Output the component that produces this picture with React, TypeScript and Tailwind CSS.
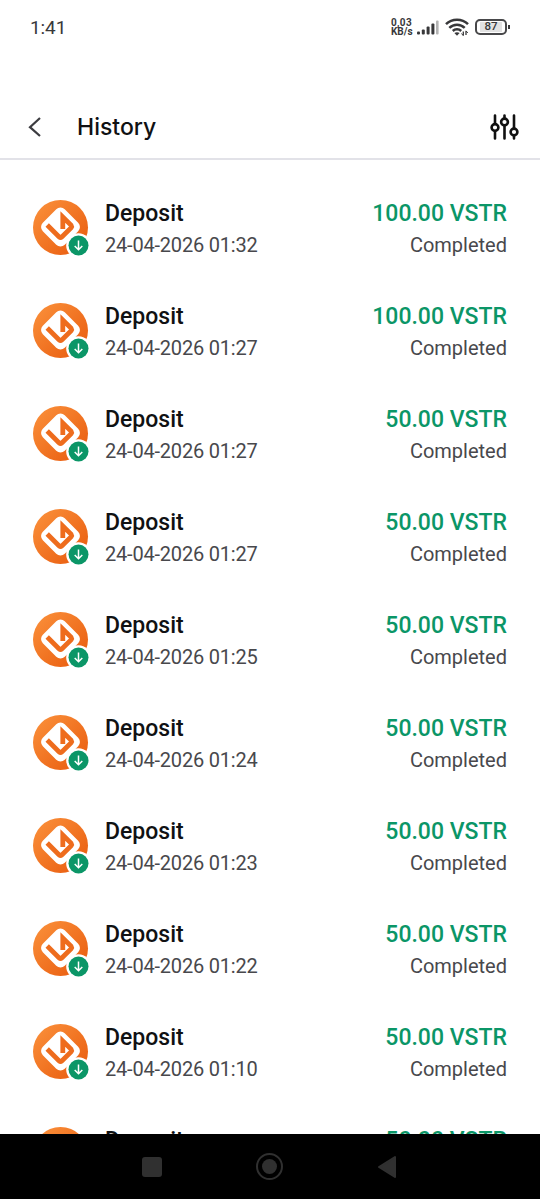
import React from "react";

type Item = { date: string; amount: string };

const items: Item[] = [
  { date: "24-04-2026 01:32", amount: "100.00" },
  { date: "24-04-2026 01:27", amount: "100.00" },
  { date: "24-04-2026 01:27", amount: "50.00" },
  { date: "24-04-2026 01:27", amount: "50.00" },
  { date: "24-04-2026 01:25", amount: "50.00" },
  { date: "24-04-2026 01:24", amount: "50.00" },
  { date: "24-04-2026 01:23", amount: "50.00" },
  { date: "24-04-2026 01:22", amount: "50.00" },
  { date: "24-04-2026 01:10", amount: "50.00" },
  { date: "24-04-2026 01:09", amount: "50.00" },
];

function StatusBar() {
  return (
    <div className="flex h-[54px] shrink-0 items-center justify-between pl-[30px] pr-[30px] text-[#38383a]">
      <span className="text-[19px] leading-none tracking-[-0.1px]">1:41</span>
      <div className="flex items-center">
        <div className="w-[21px] text-center text-[10px] font-bold leading-[9px]">
          <div className="tracking-[0.3px]">0,03</div>
          <div>KB/s</div>
        </div>
        {/* señal */}
        <svg width="22" height="15" viewBox="0 0 22 15" className="ml-[5px]">
          <g fill="#38383a">
            <rect x="0" y="11.5" width="3" height="3" rx="1" />
            <rect x="4.8" y="9.5" width="3" height="5" rx="1" />
            <rect x="9.6" y="6.5" width="3" height="8" rx="1" />
            <rect x="14.4" y="3.5" width="3" height="11" rx="1" />
          </g>
          <rect x="19" y="0.5" width="2.6" height="14" rx="1" fill="#b4b4b4" />
        </svg>
        {/* wifi */}
        <svg width="24" height="18" viewBox="0 0 24 18" className="ml-[6px]" fill="none" stroke="#38383a" strokeWidth="2.5">
          <path d="M1 6.2C7 .2 17 .2 23 6.2" />
          <path d="M4.3 9.9C8.6 5.7 15.4 5.7 19.7 9.9" />
          <path d="M7.8 13C10 10.8 14 10.8 16.2 13" />
          <path d="M9.4 15q2.6-1.6 5.2 0l-2.6 2.8z" fill="#38383a" stroke="none" />
          <path d="M18.3 13.5v4M21 13v4" strokeWidth="1.3" />
          <path d="M16.5 15.5l1.8 2.2M22.8 15l-1.8-2.2" strokeWidth="1" />
        </svg>
        {/* bateria */}
        <div className="ml-[6px] flex items-center">
          <div className="flex h-[16px] w-[32px] items-center justify-center rounded-[5px] border-2 border-[#48484a] p-px">
            <div className="flex h-full w-[22px] items-center justify-center bg-[#e2e2e2] text-[11.5px] font-medium leading-none">87</div>
          </div>
          <div className="ml-px h-1 w-[2px] bg-[#38383a]" />
        </div>
      </div>
    </div>
  );
}

function TokenIcon() {
  return (
    <svg width="58" height="60" viewBox="0 0 58 60" className="shrink-0">
      <defs>
        <linearGradient id="token" x1="0" y1="0" x2="1" y2="1">
          <stop offset="0" stopColor="#fb923c" />
          <stop offset="1" stopColor="#e8590c" />
        </linearGradient>
      </defs>
      <circle cx="27.5" cy="27.5" r="27.5" fill="url(#token)" />
      <rect x="12" y="11.5" width="31" height="31" rx="6" fill="#fff" transform="rotate(45 27.5 27)" />
      <path
        d="M14.2 25L26.2 37Q27.5 38.2 28.8 37L38.2 27.6Q39 26.5 38.2 25.4L29.8 17V29"
        fill="none"
        stroke="#ee6c1d"
        strokeWidth="4.8"
      />
      <circle cx="45.5" cy="45.5" r="12.3" fill="#fff" />
      <circle cx="45.5" cy="45.5" r="10" fill="#0b9667" />
      <path d="M45.5 40.5v9M41.7 46l3.8 3.8 3.8-3.8" fill="none" stroke="#fff" strokeWidth="1.5" />
    </svg>
  );
}

function Row({ date, amount }: Item) {
  return (
    <li className="flex h-[103px] shrink-0 items-start pl-[33px] pr-[33px]">
      <TokenIcon />
      <div className="ml-[14px] flex-1">
        <div className="text-[23px] font-medium leading-7 text-[#101113]">Deposit</div>
        <div className="mt-[3px] text-[20px] leading-7 tracking-[-0.2px] text-[#48484c]">{date}</div>
      </div>
      <div className="text-right">
        <div className="text-[23px] font-medium leading-7 text-[#0b9667]">{amount} VSTR</div>
        <div className="mt-[3px] text-[20px] leading-7 text-[#48484c]">Completed</div>
      </div>
    </li>
  );
}

export default function App() {
  return (
    <div className="flex h-[1199px] w-[540px] flex-col overflow-hidden bg-white font-['Roboto',sans-serif]">
      <StatusBar />

      <header className="flex h-[106px] shrink-0 items-center border-b-2 border-[#e2e2e8] pl-[28px] pr-[21px] pt-[41px]">
        <svg width="14" height="20" viewBox="0 0 14 20" fill="none" stroke="#3c3c40" strokeWidth="2.2">
          <path d="M12 1L2 10.2L12 19" />
        </svg>
        <h1 className="ml-[35px] flex-1 font-['Inter',sans-serif] text-[23px] font-medium leading-7 text-[#101113]">History</h1>
        <svg width="29" height="26" viewBox="0 0 29 26" fill="none" stroke="#111" strokeWidth="2.6" strokeLinecap="round">
          <path d="M5 1.5V9.5M5 17.5V24.5M14.5 1.5V4M14.5 12V24.5M24 1.5V14M24 22V24.5" />
          <circle cx="5" cy="13.5" r="3.4" />
          <circle cx="14.5" cy="8" r="3.4" />
          <circle cx="24" cy="18" r="3.4" />
        </svg>
      </header>

      <ul className="flex min-h-0 flex-1 flex-col overflow-hidden pt-10">
        {items.map((item, i) => (
          <Row key={i} {...item} />
        ))}
      </ul>

      {/* barra de navegacion */}
      <nav className="flex h-[65px] shrink-0 items-center justify-between bg-black pl-[142px] pr-[143px]">
        <div className="h-[20px] w-[20px] rounded-[3px] bg-[#303030]" />
        <svg width="28" height="28" viewBox="0 0 28 28">
          <circle cx="13.5" cy="13.5" r="12.5" fill="none" stroke="#303030" strokeWidth="2" />
          <circle cx="13.5" cy="13.5" r="7.5" fill="#303030" />
        </svg>
        <svg width="20" height="24" viewBox="0 0 20 24">
          <path d="M2 12L18 2V22Z" fill="#303030" stroke="#303030" strokeWidth="2" strokeLinejoin="round" />
        </svg>
      </nav>
    </div>
  );
}
